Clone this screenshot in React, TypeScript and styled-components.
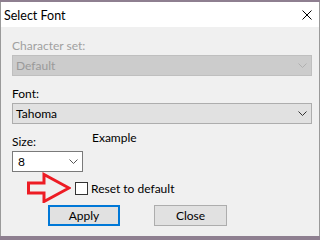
import React from "react";
import styled, { createGlobalStyle } from "styled-components";

const Global = createGlobalStyle`
  html, body { margin: 0; padding: 0; }
  body {
    width: 100%;
    height: 238px;
    overflow: hidden;
    background: #8e7f90;
    font-family: Lato, "Noto Sans", "DejaVu Sans", sans-serif;
    font-size: 12px;
    color: #000;
  }
  * { box-sizing: border-box; }
`;

const Window = styled.div`
  margin-top: 2px;
  width: 100%;
  height: 234px;
  display: flex;
  flex-direction: column;
  border-left: 1px solid #9a9a9a;
  border-right: 1px solid #9a9a9a;
  background: #f0f0f0;
`;

const TitleBar = styled.div`
  height: 25px;
  flex: none;
  background: #fff;
  display: flex;
  align-items: center;
  justify-content: space-between;
  padding: 0 7px 0 3px;
`;

const Title = styled.span`
  font-size: 12.5px;
  line-height: 15px;
  margin-top: 1px;
`;

const CloseIcon = styled.svg`
  width: 10px;
  height: 10px;
  display: block;
`;

const Body = styled.div`
  flex: 1;
  display: flex;
  flex-direction: column;
  padding: 11px 7px 0 11px;
`;

const Label = styled.div<{ $disabled?: boolean }>`
  line-height: 15px;
  height: 15px;
  color: ${(p) => (p.$disabled ? "#a0a0a0" : "#000")};
`;

type Variant = "disabled" | "dropdown" | "edit";

const SelectBox = styled.div<{ $variant: Variant; $width?: number }>`
  height: 21px;
  width: ${(p) => (p.$width ? `${p.$width}px` : "100%")};
  display: flex;
  align-items: center;
  justify-content: space-between;
  padding: 0 4px 0 ${(p) => (p.$variant === "edit" ? 5 : 3)}px;
  border: 1px solid
    ${(p) =>
      p.$variant === "disabled"
        ? "#bfbfbf"
        : p.$variant === "dropdown"
        ? "#adadad"
        : "#7a7a7a"};
  background: ${(p) =>
    p.$variant === "disabled"
      ? "#cccccc"
      : p.$variant === "dropdown"
      ? "#e1e1e1"
      : "#ffffff"};
  color: ${(p) => (p.$variant === "disabled" ? "#9a9a9a" : "#000")};
  margin-top: 2px;
`;

const Chevron = styled.svg`
  width: 9px;
  height: 5px;
  display: block;
  flex: none;
`;

const Spacer = styled.div<{ $h: number }>`
  height: ${(p) => p.$h}px;
  flex: none;
`;

const SizeRow = styled.div`
  display: flex;
  align-items: flex-start;
  margin-top: 10px;
`;

const SizeGroup = styled.div`
  display: flex;
  flex-direction: column;
  width: 71px;
`;

const Example = styled.div`
  line-height: 15px;
  margin-left: 9px;
  margin-top: -4px;
`;

const CheckRow = styled.div`
  display: flex;
  align-items: center;
  margin-left: 15px;
  height: 31px;
`;

const Arrow = styled.svg`
  width: 44px;
  height: 31px;
  display: block;
  flex: none;
`;

const CheckBox = styled.span`
  width: 13px;
  height: 13px;
  border: 1px solid #333;
  background: #fff;
  margin-left: 4px;
  margin-top: 2px;
  flex: none;
`;

const CheckLabel = styled.span`
  margin-left: 3px;
  margin-top: 2px;
  line-height: 15px;
`;

const ButtonRow = styled.div`
  display: flex;
  margin-top: 2px;
  margin-left: 36px;
  gap: 34px;
`;

const Button = styled.div<{ $default?: boolean }>`
  width: ${(p) => (p.$default ? 72 : 73)}px;
  height: 21px;
  display: flex;
  align-items: center;
  justify-content: center;
  background: #e1e1e1;
  border: ${(p) => (p.$default ? "2px solid #0078d7" : "1px solid #adadad")};
  line-height: 15px;
`;

const ChevronDown: React.FC<{ color: string }> = ({ color }) => (
  <Chevron viewBox="0 0 9 5">
    <path d="M0.5 0.5 L4.5 4.5 L8.5 0.5" fill="none" stroke={color} strokeWidth="1" />
  </Chevron>
);

export default function App() {
  return (
    <>
      <Global />
      <Window>
        <TitleBar>
          <Title>Select Font</Title>
          <CloseIcon viewBox="0 0 10 10">
            <path d="M0.5 0.5 L9.5 9.5 M9.5 0.5 L0.5 9.5" stroke="#000" strokeWidth="1" />
          </CloseIcon>
        </TitleBar>
        <Body>
          <Label $disabled>Character set:</Label>
          <SelectBox $variant="disabled">
            <span>Default</span>
            <ChevronDown color="#b0b0b0" />
          </SelectBox>
          <Spacer $h={10} />
          <Label>Font:</Label>
          <SelectBox $variant="dropdown">
            <span>Tahoma</span>
            <ChevronDown color="#333" />
          </SelectBox>
          <SizeRow>
            <SizeGroup>
              <Label>Size:</Label>
              <SelectBox $variant="edit" $width={71}>
                <span>8</span>
                <ChevronDown color="#555" />
              </SelectBox>
            </SizeGroup>
            <Example>Example</Example>
          </SizeRow>
          <CheckRow>
            <Arrow viewBox="0 0 44 31">
              <polygon
                points="1.5,11 17,11 17,2.5 42,16 17,29.5 17,21 1.5,21"
                fill="none"
                stroke="#ed1c24"
                strokeWidth="3"
                strokeLinejoin="miter"
              />
            </Arrow>
            <CheckBox />
            <CheckLabel>Reset to default</CheckLabel>
          </CheckRow>
          <ButtonRow>
            <Button $default>Apply</Button>
            <Button>Close</Button>
          </ButtonRow>
        </Body>
      </Window>
    </>
  );
}
